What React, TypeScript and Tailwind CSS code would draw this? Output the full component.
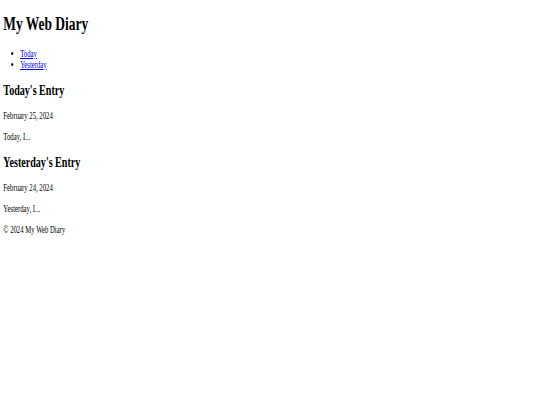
export default function App() {
  const entries = [
    { title: "Today's Entry", date: "February 25, 2024", body: "Today, I..." },
    { title: "Yesterday's Entry", date: "February 24, 2024", body: "Yesterday, I..." },
  ];

  return (
    <div className="min-h-[405px] w-[540px] overflow-hidden bg-white">
      {/* page is drawn condensed, as in the reference */}
      <div className="w-[771px] origin-top-left scale-x-[0.7] px-[4.8px] text-[9.6px] leading-[1.15] text-black [font-family:'Liberation_Serif','Times_New_Roman',serif]">
        <header>
          <h1 className="my-[12.86px] text-[19.2px] font-bold leading-[1.15]">My Web Diary</h1>
          <nav>
            <ul className="my-[9.6px] list-disc pl-[24px]">
              <li>
                <a href="#today" className="text-[#0000ee] underline">Today</a>
              </li>
              <li>
                <a href="#yesterday" className="text-[#0000ee] underline">Yesterday</a>
              </li>
            </ul>
          </nav>
        </header>

        <main>
          {entries.map((e) => (
            <section key={e.title}>
              <h2 className="my-[11.95px] text-[14.4px] font-bold leading-[1.15]">{e.title}</h2>
              <p className="my-[9.6px]">{e.date}</p>
              <p className="my-[9.6px]">{e.body}</p>
            </section>
          ))}
        </main>

        <footer>
          <p className="my-[9.6px]">© 2024 My Web Diary</p>
        </footer>
      </div>
    </div>
  );
}
